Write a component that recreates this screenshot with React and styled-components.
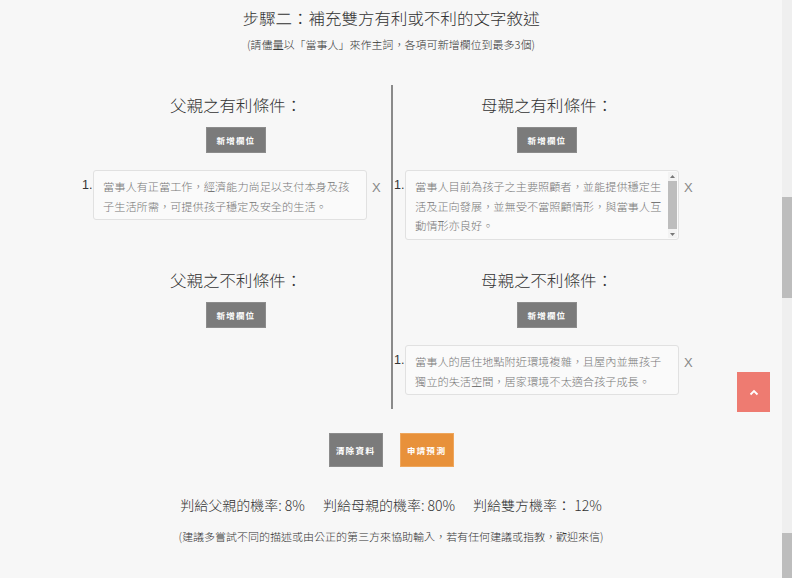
import React from 'react';
import styled, { createGlobalStyle } from 'styled-components';

const GlobalStyle = createGlobalStyle`
  html, body {
    margin: 0;
    padding: 0;
    background: #f7f7f7;
    overflow: hidden;
  }
  body {
    font-family: "Noto Sans TC", "Noto Sans CJK TC", "Noto Sans", sans-serif;
    color: #333;
  }
`;

const Page = styled.div`
  display: flex;
  height: 578px;
  background: #f7f7f7;
`;

const Main = styled.main`
  flex: 1;
  display: flex;
  flex-direction: column;
  align-items: center;
  padding-top: 6px;
`;

const Title = styled.h2`
  margin: 0;
  font-size: 16.5px;
  line-height: 24px;
  font-weight: 300;
  color: #333;
`;

const Subtitle = styled.p`
  margin: 5px 0 0;
  font-size: 11px;
  line-height: 18px;
  font-weight: 300;
  color: #333;
`;

const Board = styled.div`
  margin-top: 32px;
  width: 620px;
  display: grid;
  grid-template-columns: 310px 310px;
`;

const Section = styled.section`
  display: flex;
  flex-direction: column;
  align-items: center;
  padding: 8px 0 ${({ $bottom }) => $bottom}px;
  border-left: ${({ $right }) => ($right ? '2px solid #8a8a8a' : 'none')};
`;

const Heading = styled.h3`
  margin: 0;
  font-size: 16.5px;
  line-height: 24px;
  font-weight: 300;
  color: #333;
`;

const SmallButton = styled.button`
  margin-top: 10px;
  width: 60px;
  height: 26px;
  border: 1px solid #8c8c8c;
  background: #7b7b7b;
  color: #fff;
  font-family: inherit;
  font-size: 8.5px;
  font-weight: 700;
  letter-spacing: 1.2px;
  padding: 0;
  cursor: pointer;
`;

const ItemList = styled.ol`
  list-style: none;
  margin: 17px 0 0;
  padding: 0;
  align-self: stretch;
`;

const Item = styled.li`
  display: flex;
  align-items: flex-start;
`;

const Num = styled.span`
  width: 12px;
  padding-left: 1px;
  box-sizing: border-box;
  margin-top: 6px;
  font-family: "Liberation Sans", sans-serif;
  font-size: 12.5px;
  line-height: 18px;
  color: #333;
`;

const Field = styled.div`
  position: relative;
  display: flex;
`;

const TextBox = styled.textarea`
  box-sizing: border-box;
  width: 274px;
  height: ${({ $height }) => $height}px;
  margin: 0;
  padding: 6px ${({ $scroll }) => ($scroll ? 15 : 12)}px 3px 9px;
  border: 1px solid #e1e1e1;
  border-radius: 3px;
  background: #fafafa;
  color: #777;
  font-family: "Noto Sans TC", "Noto Sans CJK TC", sans-serif;
  font-size: 11.2px;
  font-weight: 300;
  line-height: 19.5px;
  resize: none;
  overflow: hidden;
  outline: none;
`;

/* drawn scrollbar, laid over the right edge of the textarea */
const FakeBar = styled.div`
  position: absolute;
  top: 2px;
  right: 2px;
  bottom: 2px;
  width: 9px;
  display: flex;
  flex-direction: column;
  align-items: center;
  background: #f3f3f3;
`;

const BarArrow = styled.div`
  height: 8px;
  display: flex;
  align-items: center;
  justify-content: center;
`;

const BarThumb = styled.div`
  flex: 1;
  width: 9px;
  margin: 1px 0;
  background: #bdbdbd;
`;

const Remove = styled.span`
  margin: 9px 0 0 5px;
  font-family: "Liberation Sans", sans-serif;
  font-size: 13px;
  line-height: 18px;
  color: #888;
  cursor: pointer;
`;

const Actions = styled.div`
  margin-top: 24px;
  display: flex;
  gap: 17px;
`;

const ActionButton = styled.button`
  width: 54px;
  height: 34px;
  padding: 0;
  border: 1px solid ${({ $tone }) => ($tone === 'orange' ? '#eea65c' : '#8c8c8c')};
  background: ${({ $tone }) => ($tone === 'orange' ? '#e8913a' : '#7b7b7b')};
  color: #fff;
  font-family: inherit;
  font-size: 8.5px;
  font-weight: 700;
  letter-spacing: 1.2px;
  cursor: pointer;
`;

const Result = styled.p`
  margin: 28px 0 0;
  display: flex;
  gap: 18px;
  font-size: 14px;
  line-height: 20px;
  font-weight: 300;
  color: #333;
`;

const Note = styled.p`
  margin: 13px 0 0;
  font-size: 11px;
  line-height: 16px;
  font-weight: 300;
  color: #333;
`;

const TopButton = styled.button`
  position: fixed;
  left: 737px;
  top: 372px;
  width: 33px;
  height: 40px;
  border: none;
  padding: 0;
  background: #ee7b71;
  display: flex;
  align-items: center;
  justify-content: center;
  cursor: pointer;
`;

const ScrollTrack = styled.div`
  width: 10px;
  display: flex;
  flex-direction: column;
  background: #efefef;
`;

const ScrollGap = styled.div`
  height: ${({ $h }) => $h}px;
`;

const ScrollThumb = styled.div`
  height: ${({ $h }) => $h}px;
  background: #bdbdbd;
`;

const sections = [
  { title: '父親之有利條件：', items: ['當事人有正當工作，經濟能力尚足以支付本身及孩子生活所需，可提供孩子穩定及安全的生活。'], bottom: 20 },
  { title: '母親之有利條件：', right: true, scroll: true, items: ['當事人目前為孩子之主要照顧者，並能提供穩定生活及正向發展，並無受不當照顧情形，與當事人互動情形亦良好。'], bottom: 20 },
  { title: '父親之不利條件：', items: [], bottom: 14 },
  { title: '母親之不利條件：', right: true, items: ['當事人的居住地點附近環境複雜，且屋內並無孩子獨立的失活空間，居家環境不太適合孩子成長。'], bottom: 14 },
];

const Arrow = ({ up }) => (
  <svg width="5" height="3" viewBox="0 0 5 3">
    <path d={up ? 'M0 3 L2.5 0 L5 3 Z' : 'M0 0 L2.5 3 L5 0 Z'} fill="#777" />
  </svg>
);

const App = () => {
  return (
    <>
      <GlobalStyle />
      <Page lang="zh-TW">
        <Main>
          <Title>步驟二：補充雙方有利或不利的文字敘述</Title>
          <Subtitle>(請儘量以「當事人」來作主詞，各項可新增欄位到最多3個)</Subtitle>

          <Board>
            {sections.map((sec, i) => (
              <Section key={i} $right={sec.right} $bottom={sec.bottom}>
                <Heading>{sec.title}</Heading>
                <SmallButton>新增欄位</SmallButton>
                {sec.items.length > 0 && (
                  <ItemList>
                    {sec.items.map((text, j) => (
                      <Item key={j}>
                        <Num>{j + 1}.</Num>
                        <Field>
                          <TextBox
                            lang="zh-TW"
                            $scroll={sec.scroll}
                            $height={sec.scroll ? 70 : 50}
                            defaultValue={text}
                          />
                          {sec.scroll && (
                            <FakeBar>
                              <BarArrow><Arrow up /></BarArrow>
                              <BarThumb />
                              <BarArrow><Arrow /></BarArrow>
                            </FakeBar>
                          )}
                        </Field>
                        <Remove>X</Remove>
                      </Item>
                    ))}
                  </ItemList>
                )}
              </Section>
            ))}
          </Board>

          <Actions>
            <ActionButton>清除資料</ActionButton>
            <ActionButton $tone="orange">申請預測</ActionButton>
          </Actions>

          <Result>
            <span>判給父親的機率: 8%</span>
            <span>判給母親的機率: 80%</span>
            <span>判給雙方機率： 12%</span>
          </Result>
          <Note>(建議多嘗試不同的描述或由公正的第三方來協助輸入，若有任何建議或指教，歡迎來信)</Note>
        </Main>

        <ScrollTrack>
          <ScrollGap $h={197} />
          <ScrollThumb $h={101} />
          <ScrollGap $h={235} />
          <ScrollThumb $h={45} />
        </ScrollTrack>
      </Page>

      <TopButton aria-label="回到頂端">
        <svg width="10" height="7" viewBox="0 0 10 7">
          <path d="M1.5 5.5 L5 2 L8.5 5.5" fill="none" stroke="#fff" strokeWidth="1.8" />
        </svg>
      </TopButton>
    </>
  );
};

export default App;
